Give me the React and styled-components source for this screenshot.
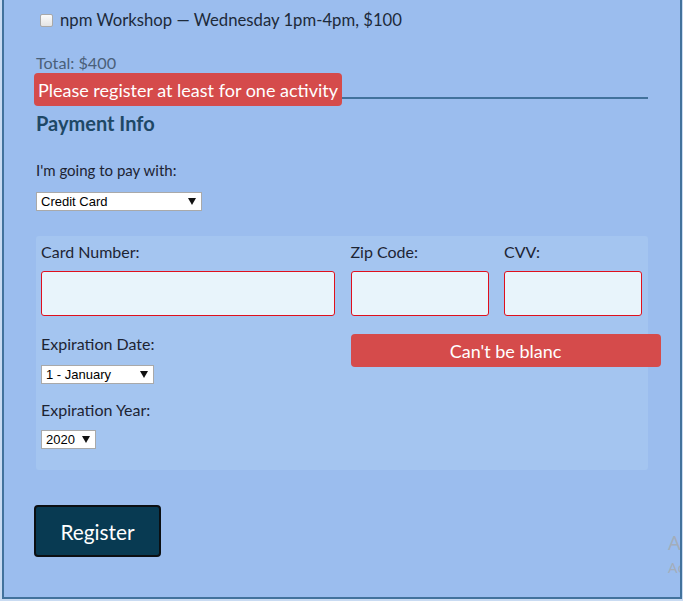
import React from "react";
import styled, { createGlobalStyle } from "styled-components";

const Global = createGlobalStyle`
  html, body { margin: 0; padding: 0; background: #c9dbf2; }
  body { font-family: Lato, "Open Sans", sans-serif; }
`;

const Page = styled.div`
  position: relative;
  box-sizing: border-box;
  margin-left: 2px;
  width: 680px;
  height: 599px;
  background: #9bbdee;
  border: 2px solid #42729c;
  border-top: none;
  padding: 0 32px 0 32px;
  overflow: hidden;
`;

const ActivityRow = styled.label`
  display: flex;
  align-items: center;
  gap: 7px;
  margin-left: 4px;
  padding-top: 11px;
  height: 18px;
  font-size: 16.7px;
  color: #1d2a3a;
`;

const Check = styled.span`
  width: 11px;
  height: 11px;
  border: 1px solid #a9a9a9;
  border-radius: 2px;
  background: linear-gradient(#fbfbfb, #e4e4e4);
`;

const Total = styled.div`
  margin-top: 25px;
  font-size: 16.2px;
  color: #4a6079;
  line-height: 18px;
`;

const DividerZone = styled.div`
  position: relative;
  margin-top: 1px;
  height: 24px;
  border-bottom: 2px solid #42729c;
`;

const ErrorBadge = styled.div`
  position: absolute;
  left: -2px;
  top: 0;
  height: 33px;
  padding: 0 4px;
  display: flex;
  align-items: center;
  border-radius: 4px;
  background: #d54b4b;
  color: #fff;
  font-size: 18px;
  white-space: nowrap;
`;

const SectionTitle = styled.h2`
  margin: 12px 0 0;
  font-size: 20px;
  font-weight: 700;
  color: #1e4866;
  line-height: 24px;
`;

const FieldLabel = styled.div`
  font-size: ${(p) => p.$size || 16}px;
  color: #1d2433;
  line-height: 20px;
  margin-top: ${(p) => p.$mt || 0}px;
`;

const NativeSelect = styled.div`
  box-sizing: border-box;
  display: flex;
  align-items: center;
  justify-content: space-between;
  width: ${(p) => p.$w}px;
  height: 19px;
  margin-top: ${(p) => p.$mt || 0}px;
  padding: 0 5px 0 4px;
  background: #fff;
  border: 1px solid #a9a9a9;
  font-family: Arial, "Liberation Sans", sans-serif;
  font-size: 13px;
  color: #000;
  &::after {
    content: "";
    border-left: 4px solid transparent;
    border-right: 4px solid transparent;
    border-top: 7px solid #111;
  }
`;

const CardPanel = styled.div`
  margin-top: 25px;
  width: 612px;
  height: 234px;
  box-sizing: border-box;
  padding: 6px 6px 0 5px;
  background: #a4c5f0;
  border-radius: 3px;
  display: grid;
  grid-template-columns: 294px 138px 138px;
  column-gap: 15.5px;
  align-content: start;
`;

const Field = styled.div`
  display: flex;
  flex-direction: column;
  gap: 9px;
`;

const TextInput = styled.div`
  box-sizing: border-box;
  height: 45px;
  background: #e8f4fb;
  border: 1px solid #e0101c;
  border-radius: 3px;
`;

const LeftStack = styled.div`
  margin-top: 18px;
  display: flex;
  flex-direction: column;
`;

const BlankError = styled.div`
  grid-column: 2 / span 2;
  margin-top: 18px;
  width: 310px;
  height: 33px;
  box-sizing: border-box;
  border-radius: 4px;
  background: #d54b4b;
  color: #fff;
  font-size: 18px;
  display: flex;
  align-items: center;
  justify-content: center;
  align-self: start;
`;

const RegisterButton = styled.button`
  margin-top: 35px;
  margin-left: -2px;
  width: 127px;
  height: 52px;
  background: #083a52;
  border: 2px solid #0b0f12;
  border-radius: 4px;
  color: #fff;
  font-family: inherit;
  font-size: 20.8px;
  cursor: pointer;
`;

const Watermark = styled.div`
  position: absolute;
  left: 664px;
  top: ${(p) => p.$top}px;
  font-family: "Noto Sans", "DejaVu Sans", sans-serif;
  font-size: ${(p) => p.$size}px;
  line-height: 1;
  color: #a3adbb;
  white-space: nowrap;
`;

export default function App() {
  return (
    <>
      <Global />
      <Page>
        <ActivityRow>
          <Check />
          npm Workshop — Wednesday 1pm-4pm, $100
        </ActivityRow>
        <Total>Total: $400</Total>
        <DividerZone>
          <ErrorBadge>Please register at least for one activity</ErrorBadge>
        </DividerZone>
        <SectionTitle>Payment Info</SectionTitle>
        <FieldLabel $size={15} $mt={25}>I'm going to pay with:</FieldLabel>
        <NativeSelect $w={166} $mt={12}>Credit Card</NativeSelect>
        <CardPanel>
          <Field>
            <FieldLabel>Card Number:</FieldLabel>
            <TextInput />
          </Field>
          <Field>
            <FieldLabel>Zip Code:</FieldLabel>
            <TextInput />
          </Field>
          <Field>
            <FieldLabel>CVV:</FieldLabel>
            <TextInput />
          </Field>
          <LeftStack>
            <FieldLabel>Expiration Date:</FieldLabel>
            <NativeSelect $w={113} $mt={11}>1 - January</NativeSelect>
            <FieldLabel $mt={16}>Expiration Year:</FieldLabel>
            <NativeSelect $w={55} $mt={10}>2020</NativeSelect>
          </LeftStack>
          <BlankError>Can't be blanc</BlankError>
        </CardPanel>
        <RegisterButton>Register</RegisterButton>
        <Watermark $top={533} $size={20}>Ac</Watermark>
        <Watermark $top={560} $size={15}>Ac</Watermark>
      </Page>
    </>
  );
}
